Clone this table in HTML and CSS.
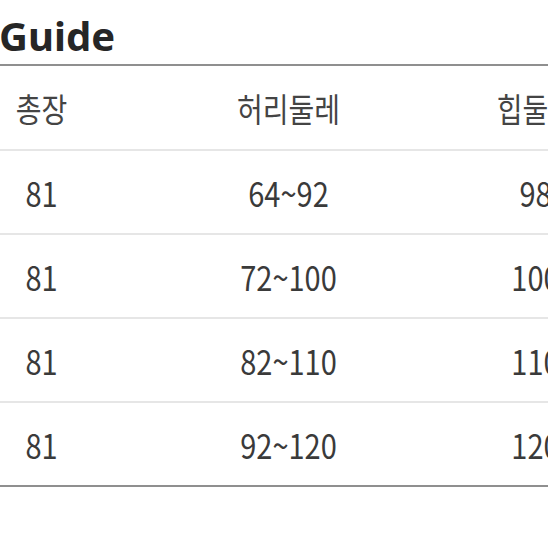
FILE: index.html
```html
<!DOCTYPE html>
<html lang="ko">
<head>
<meta charset="utf-8">
<link rel="stylesheet" href="styles.css">
</head>
<body>
<div class="page">
  <h1 class="title">Guide</h1>
  <div class="table">
    <div class="row head">
      <div class="cell"><span>총장</span></div>
      <div class="cell"><span>허리둘레</span></div>
      <div class="cell"><span>힙둘레</span></div>
    </div>
    <div class="row">
      <div class="cell"><span>81</span></div>
      <div class="cell"><span>64~92</span></div>
      <div class="cell"><span>98</span></div>
    </div>
    <div class="row">
      <div class="cell"><span>81</span></div>
      <div class="cell"><span>72~100</span></div>
      <div class="cell"><span>100</span></div>
    </div>
    <div class="row">
      <div class="cell"><span>81</span></div>
      <div class="cell"><span>82~110</span></div>
      <div class="cell"><span>110</span></div>
    </div>
    <div class="row last">
      <div class="cell"><span>81</span></div>
      <div class="cell"><span>92~120</span></div>
      <div class="cell"><span>120</span></div>
    </div>
  </div>
</div>
</body>
</html>
```
FILE: styles.css
```css
html, body {
  margin: 0;
  padding: 0;
  background: #ffffff;
}
body {
  width: 548px;
  height: 548px;
  overflow: hidden;
  font-family: "Noto Sans CJK KR", "Noto Sans", sans-serif;
}
.page {
  width: 548px;
  overflow: hidden;
}
.title {
  margin: 0 0 0 -1px;
  height: 52px;
  padding-top: 12px;
  font-family: "Noto Sans", "Noto Sans CJK KR", sans-serif;
  font-weight: 700;
  font-size: 40px;
  line-height: 48px;
  color: #262626;
}
.table {
  width: 741px;
  margin-left: -82px;
  border-top: 2px solid #8f8f8f;
  border-bottom: 2px solid #8f8f8f;
}
.row {
  display: grid;
  grid-template-columns: 247px 247px 247px;
  height: 82px;
  border-bottom: 2px solid #e6e6e6;
}
.row.head {
  height: 83px;
}
.row.last {
  border-bottom: none;
}
.cell {
  display: flex;
  align-items: center;
  justify-content: center;
  font-size: 29px;
  color: #3a3a3a;
}
.head .cell {
  font-size: 28px;
  color: #444444;
}
.cell span {
  display: inline-block;
  transform: scaleY(1.18);
  white-space: nowrap;
}
```
